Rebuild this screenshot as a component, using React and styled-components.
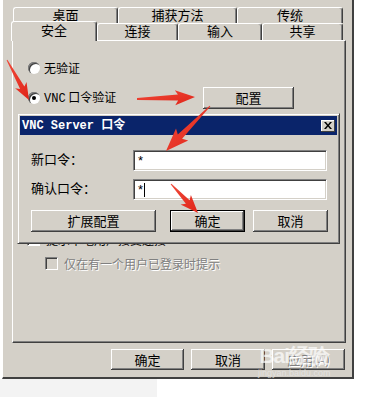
import React from "react";
import styled, { createGlobalStyle } from "styled-components";

const Global = createGlobalStyle`
  body {
    margin: 0;
    background: #ffffff;
    font-family: "Noto Sans CJK SC", "Liberation Sans", sans-serif;
    font-size: 12px;
    color: #000;
  }
`;

const Page = styled.div`
  position: relative;
  width: 371px;
  height: 397px;
  overflow: hidden;
`;

const Win = styled.div`
  position: relative;
  margin-left: 2px;
  width: 352px;
  height: 379px;
  box-sizing: border-box;
  background: #d4d0c8;
  border-left: 1px solid #ffffff;
  border-right: 2px solid #404040;
  border-bottom: 2px solid #404040;
  padding-top: 7px;
`;

const BelowStrip = styled.div`
  width: 157px;
  height: 18px;
  background: #f3f3f3;
`;

const TabRow = styled.div`
  display: flex;
  align-items: flex-end;
  height: ${(p) => p.$h}px;
  margin-left: ${(p) => p.$left}px;
  position: relative;
  z-index: ${(p) => p.$z};
`;

const Tab = styled.div`
  box-sizing: border-box;
  width: ${(p) => p.$w}px;
  height: ${(p) => (p.$active ? 20 : p.$h)}px;
  margin-bottom: ${(p) => (p.$active ? -1 : 0)}px;
  background: #d4d0c8;
  border-top: 1px solid #ffffff;
  border-left: 1px solid #ffffff;
  border-right: 1px solid #404040;
  box-shadow: inset -1px 0 #808080;
  border-radius: 3px 3px 0 0;
  display: flex;
  justify-content: center;
  align-items: flex-start;
  padding-top: ${(p) => (p.$active ? 1 : 0)}px;
  line-height: 14px;
  font-size: 13px;
  position: relative;
  z-index: ${(p) => (p.$active ? 3 : 1)};
`;

const Panel = styled.div`
  position: relative;
  z-index: 2;
  box-sizing: border-box;
  margin-left: 9px;
  width: 334px;
  height: 303px;
  border-top: 1px solid #ffffff;
  border-left: 1px solid #ffffff;
  border-right: 1px solid #404040;
  border-bottom: 1px solid #404040;
  box-shadow: inset -1px -1px #808080;
  display: flex;
  flex-direction: column;
`;

const OptionRow = styled.div`
  display: flex;
  align-items: center;
  height: ${(p) => p.$h}px;
  margin-top: ${(p) => p.$top}px;
  margin-left: ${(p) => p.$left}px;
  color: ${(p) => (p.$disabled ? "#808080" : "#000")};
  text-shadow: ${(p) => (p.$disabled ? "1px 1px #ffffff" : "none")};
  line-height: 14px;
`;

const Radio = styled.span`
  position: relative;
  width: 12px;
  height: 12px;
  border-radius: 50%;
  background: #ffffff;
  box-shadow: inset 1px 1px #808080, inset 2px 2px #404040;
  margin-right: 4px;
  flex: none;
  &::after {
    content: "";
    display: ${(p) => (p.$checked ? "block" : "none")};
    position: absolute;
    left: 4px;
    top: 4px;
    width: 4px;
    height: 4px;
    border-radius: 50%;
    background: #000;
  }
`;

const Check = styled.span`
  width: 13px;
  height: 13px;
  box-sizing: border-box;
  flex: none;
  background: ${(p) => (p.$disabled ? "#d4d0c8" : "#ffffff")};
  border-top: 1px solid #808080;
  border-left: 1px solid #808080;
  border-right: 1px solid #ffffff;
  border-bottom: 1px solid #ffffff;
  box-shadow: inset 1px 1px #404040;
  margin-right: 6px;
`;

const Label = styled.span`
  width: ${(p) => (p.$w ? `${p.$w}px` : "auto")};
  flex: none;
  font-family: ${(p) => (p.$mono ? '"Liberation Mono", "Noto Sans CJK SC", monospace' : "inherit")};
`;

const Button = styled.button`
  box-sizing: border-box;
  width: ${(p) => p.$w}px;
  height: ${(p) => p.$h || 21}px;
  padding: 0;
  background: #d4d0c8;
  border: ${(p) => (p.$default ? "1px solid #000" : "none")};
  box-shadow: inset -1px -1px #404040, inset 1px 1px #ffffff,
    inset -2px -2px #808080;
  font-family: "Noto Sans CJK SC", sans-serif;
  font-size: 13px;
  line-height: 14px;
  color: ${(p) => (p.$disabled ? "#808080" : "#000")};
  text-shadow: ${(p) => (p.$disabled ? "1px 1px #ffffff" : "none")};
`;

const Footer = styled.div`
  display: flex;
  justify-content: flex-end;
  gap: 7px;
  margin-top: 6px;
  padding-right: 7px;
`;

const Dialog = styled.div`
  position: absolute;
  left: 14px;
  top: 113px;
  z-index: 5;
  width: 323px;
  height: 131px;
  box-sizing: border-box;
  background: #d4d0c8;
  border-top: 1px solid #d4d0c8;
  border-left: 1px solid #d4d0c8;
  border-right: 1px solid #404040;
  border-bottom: 1px solid #404040;
  box-shadow: inset 1px 1px #ffffff, inset -1px -1px #808080;
  padding: 2px;
`;

const TitleBar = styled.div`
  height: 19px;
  background: #0a246a;
  display: flex;
  align-items: center;
  justify-content: space-between;
  padding: 0 2px 0 2px;
`;

const Title = styled.span`
  color: #ffffff;
  font-family: "Liberation Mono", "Noto Sans CJK SC", monospace;
  font-weight: bold;
  font-size: 12px;
  line-height: 14px;
`;

const CloseBtn = styled.span`
  width: 14px;
  height: 12px;
  box-sizing: border-box;
  background: #d4d0c8;
  box-shadow: inset -1px -1px #404040, inset 1px 1px #ffffff;
  display: flex;
  align-items: center;
  justify-content: center;
`;

const DialogBody = styled.div`
  padding: 15px 9px 0 11px;
  display: flex;
  flex-direction: column;
`;

const FieldRow = styled.div`
  display: grid;
  grid-template-columns: 102px 194px;
  align-items: center;
  height: 21px;
  margin-bottom: ${(p) => p.$gap}px;
`;

const FieldLabel = styled.span`
  font-size: 13px;
  line-height: 14px;
  margin-top: -4px;
`;

const Input = styled.div`
  height: 21px;
  box-sizing: border-box;
  background: #ffffff;
  border-top: 1px solid #808080;
  border-left: 1px solid #808080;
  border-right: 1px solid #ffffff;
  border-bottom: 1px solid #ffffff;
  box-shadow: inset 1px 1px #404040, inset -1px -1px #d4d0c8;
  padding: 3px 0 0 4px;
  font-family: "Liberation Sans", sans-serif;
  font-size: 13px;
  line-height: 14px;
  display: flex;
  align-items: flex-start;
`;

const Caret = styled.span`
  width: 1px;
  height: 14px;
  background: #000;
  margin-left: 1px;
`;

const ButtonRow = styled.div`
  display: flex;
  gap: 8px;
  height: 22px;
  & > :first-child {
    margin-right: 6px;
  }
`;

const Overlay = styled.svg`
  position: absolute;
  left: 0;
  top: 0;
  z-index: 10;
  pointer-events: none;
`;

const Watermark = styled.div`
  position: absolute;
  left: 258px;
  top: 344px;
  z-index: 9;
  color: rgba(255, 255, 255, 0.7);
  font-family: "Liberation Sans", sans-serif;
  display: flex;
  flex-direction: column;
  align-items: center;
`;

const WmMain = styled.span`
  font-size: 21px;
  font-weight: bold;
  line-height: 24px;
  letter-spacing: -1px;
`;

const WmSub = styled.span`
  font-size: 9px;
  line-height: 10px;
  color: rgba(230, 230, 230, 0.8);
`;

function arrow(x1, y1, x2, y2, head, hw, t0, t1) {
  const dx = x2 - x1;
  const dy = y2 - y1;
  const len = Math.hypot(dx, dy);
  const ux = dx / len;
  const uy = dy / len;
  const px = -uy;
  const py = ux;
  const bx = x2 - ux * head;
  const by = y2 - uy * head;
  const wx = bx - ux * 3;
  const wy = by - uy * 3;
  const pts = [
    [x1 + (px * t0) / 2, y1 + (py * t0) / 2],
    [bx + (px * t1) / 2, by + (py * t1) / 2],
    [wx + (px * hw) / 2, wy + (py * hw) / 2],
    [x2, y2],
    [wx - (px * hw) / 2, wy - (py * hw) / 2],
    [bx - (px * t1) / 2, by - (py * t1) / 2],
    [x1 - (px * t0) / 2, y1 - (py * t0) / 2],
  ];
  return pts.map((p) => p.map((v) => v.toFixed(1)).join(",")).join(" ");
}

const arrows = [
  [7, 60, 29, 100, 14, 13, 1, 5],
  [137, 99, 195, 97, 17, 15, 2, 6],
  [210, 106, 166, 151, 20, 17, 1, 6],
  [171, 184, 198, 213, 15, 14, 1, 5],
];

export default function App() {
  return (
    <Page>
      <Global />
      <Win>
        <TabRow $h={16} $left={10} $z={1}>
          <Tab $w={105} $h={16}>桌面</Tab>
          <Tab $w={119} $h={16}>捕获方法</Tab>
          <Tab $w={106} $h={16}>传统</Tab>
        </TabRow>
        <TabRow $h={17} $left={8} $z={3}>
          <Tab $w={86} $h={17} $active>安全</Tab>
          <Tab $w={81} $h={17}>连接</Tab>
          <Tab $w={84} $h={17}>输入</Tab>
          <Tab $w={81} $h={17}>共享</Tab>
        </TabRow>
        <Panel>
          <OptionRow $h={12} $top={21} $left={15}>
            <Radio />
            <Label>无验证</Label>
          </OptionRow>
          <OptionRow $h={22} $top={13} $left={15}>
            <Radio $checked />
            <Label $w={159}>
              <Label $mono>VNC</Label> 口令验证
            </Label>
            <Button $w={91} $h={22}>配置</Button>
          </OptionRow>
          <OptionRow $h={13} $top={124} $left={14}>
            <Check />
            <Label>提示本地用户接受连接</Label>
          </OptionRow>
          <OptionRow $h={13} $top={11} $left={32} $disabled>
            <Check $disabled />
            <Label>仅在有一个用户已登录时提示</Label>
          </OptionRow>
        </Panel>
        <Footer>
          <Button $w={73}>确定</Button>
          <Button $w={74}>取消</Button>
          <Button $w={73} $disabled>应用(A)</Button>
        </Footer>

        <Dialog>
          <TitleBar>
            <Title>VNC Server 口令</Title>
            <CloseBtn>
              <svg width="8" height="7" viewBox="0 0 8 7">
                <path d="M0 0h2l2 2.5L6 0h2L5 3.5 8 7H6L4 4.5 2 7H0l3-3.5z" fill="#000" />
              </svg>
            </CloseBtn>
          </TitleBar>
          <DialogBody>
            <FieldRow $gap={8}>
              <FieldLabel>新口令：</FieldLabel>
              <Input>*</Input>
            </FieldRow>
            <FieldRow $gap={10}>
              <FieldLabel>确认口令：</FieldLabel>
              <Input>
                *<Caret />
              </Input>
            </FieldRow>
            <ButtonRow>
              <Button $w={125} $h={22}>扩展配置</Button>
              <Button $w={75} $h={22} $default>确定</Button>
              <Button $w={75} $h={22}>取消</Button>
            </ButtonRow>
          </DialogBody>
        </Dialog>
      </Win>
      <BelowStrip />
      <Watermark>
        <WmMain>Bai经验</WmMain>
        <WmSub>jingyan.baidu.com</WmSub>
      </Watermark>
      <Overlay width="371" height="397" viewBox="0 0 371 397">
        <defs>
          <linearGradient id="red" x1="0" y1="0" x2="1" y2="1">
            <stop offset="0" stopColor="#f04a3a" />
            <stop offset="1" stopColor="#e02418" />
          </linearGradient>
        </defs>
        {arrows.map((a, i) => (
          <polygon key={i} points={arrow(...a)} fill="url(#red)" />
        ))}
      </Overlay>
    </Page>
  );
}
